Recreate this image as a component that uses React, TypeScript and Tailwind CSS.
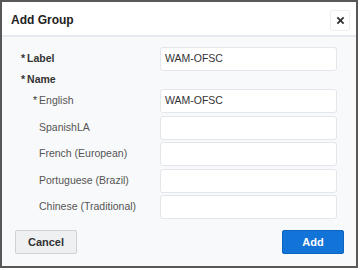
import React from "react";

const font = { fontFamily: '"Liberation Sans", Arial, sans-serif' };

const languages = [
  { name: "English", required: true, value: "WAM-OFSC" },
  { name: "SpanishLA", required: false, value: "" },
  { name: "French (European)", required: false, value: "" },
  { name: "Portuguese (Brazil)", required: false, value: "" },
  { name: "Chinese (Traditional)", required: false, value: "" },
];

function TextBox({ value }: { value: string }) {
  return (
    <div className="w-[177px] h-[24px] flex items-center bg-white border border-[#e3e6ea] rounded-[3px] px-[4px] text-[10.5px] text-[#333]">
      {value}
    </div>
  );
}

export default function App() {
  return (
    <div className="w-[360px] h-[270px] bg-white" style={font}>
      <div className="w-[358px] h-[268px] border-2 border-[#585858] flex flex-col">
        {/* header */}
        <div className="h-[35px] flex items-center justify-between pl-[9px] pr-[6px] bg-white border-b-2 border-[#e6eaee]">
          <span className="text-[12px] font-bold text-[#222] pt-[2px]">Add Group</span>
          <button className="w-[20px] h-[21px] mt-[4px] flex items-center justify-center border border-[#eceef0] rounded-[2px] bg-white">
            <svg width="9" height="9" viewBox="0 0 10 10">
              <path d="M1.5 1.5 L8.5 8.5 M8.5 1.5 L1.5 8.5" stroke="#333" strokeWidth="2" />
            </svg>
          </button>
        </div>

        {/* body */}
        <div className="flex-1 bg-[#f8f9fa] flex flex-col pt-[10px]">
          <div className="flex items-center h-[24px]">
            <div className="w-[158px] pl-[19px] text-[10.5px] font-bold text-[#333]">
              <span className="mr-[2px]">*</span>Label
            </div>
            <TextBox value="WAM-OFSC" />
          </div>

          <div className="flex items-center h-[18px] pl-[19px] text-[10.5px] font-bold text-[#333]">
            <span className="mr-[2px]">*</span>Name
          </div>

          <div className="flex flex-col gap-[2.5px]">
            {languages.map((l) => (
              <div key={l.name} className="flex items-center h-[24px]">
                <div className="w-[158px] pl-[37px] text-[10.5px] text-[#555]">
                  {l.required && <span className="-ml-[6px] mr-[2px] text-[#333]">*</span>}
                  {l.name}
                </div>
                <TextBox value={l.value} />
              </div>
            ))}
          </div>

          <div className="flex justify-between mt-[11px] pl-[13px] pr-[12px]">
            <button className="w-[62px] h-[24px] rounded-[2px] border border-[#cdd2d7] bg-[#eef0f2] text-[11px] font-bold text-[#333]">
              Cancel
            </button>
            <button className="w-[62px] h-[24px] rounded-[2px] border border-[#0b63c1] bg-[#1273d8] text-[11px] font-bold text-white">
              Add
            </button>
          </div>
        </div>
      </div>
    </div>
  );
}
